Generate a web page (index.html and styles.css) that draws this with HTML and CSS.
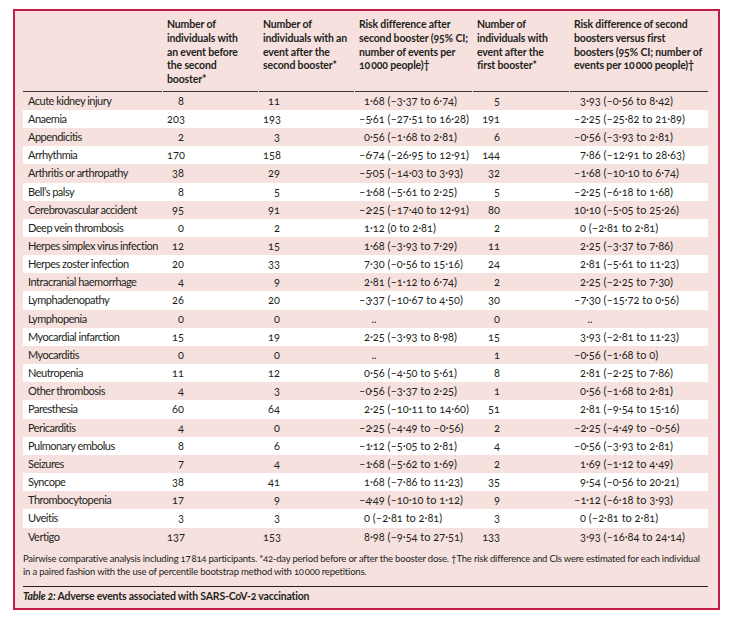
FILE: index.html
```html
<!DOCTYPE html>
<html lang="en">
<head>
<meta charset="utf-8">
<title>Table 2</title>
<link rel="stylesheet" href="styles.css">
</head>
<body>
<div class="panel">
  <div class="thead">
    <div class="th"></div>
    <div class="th">Number of<br>individuals with<br>an event before<br>the second<br>booster*</div>
    <div class="th">Number of<br>individuals with an<br>event after the<br>second booster*</div>
    <div class="th">Risk difference after<br>second booster (95% CI;<br>number of events per<br>10&#8201;000 people)&#8224;</div>
    <div class="th">Number of<br>individuals with<br>event after the<br>first booster*</div>
    <div class="th">Risk difference of second<br>boosters versus first<br>boosters (95% CI; number of<br>events per 10&#8201;000 people)&#8224;</div>
  </div>
  <div class="tbody">
    <div class="row"><div class="lab">Acute kidney injury</div><div class="n"><span class="a1">8</span></div><div class="n"><span class="a1">11</span></div><div class="d"><span class="i3">1</span>·68 (–3·37 to 6·74)</div><div class="n"><span class="a4">5</span></div><div class="d"><span class="i5">3</span>·93 (–0·56 to 8·42)</div></div>
    <div class="row"><div class="lab">Anaemia</div><div class="n"><span class="a1">203</span></div><div class="n"><span class="a1">193</span></div><div class="d"><span class="i3">–5</span>·61 (–27·51 to 16·28)</div><div class="n"><span class="a4">191</span></div><div class="d"><span class="i5">–2</span>·25 (–25·82 to 21·89)</div></div>
    <div class="row"><div class="lab">Appendicitis</div><div class="n"><span class="a1">2</span></div><div class="n"><span class="a1">3</span></div><div class="d"><span class="i3">0</span>·56 (–1·68 to 2·81)</div><div class="n"><span class="a4">6</span></div><div class="d"><span class="i5">–0</span>·56 (–3·93 to 2·81)</div></div>
    <div class="row"><div class="lab">Arrhythmia</div><div class="n"><span class="a1">170</span></div><div class="n"><span class="a1">158</span></div><div class="d"><span class="i3">–6</span>·74 (–26·95 to 12·91)</div><div class="n"><span class="a4">144</span></div><div class="d"><span class="i5">7</span>·86 (–12·91 to 28·63)</div></div>
    <div class="row"><div class="lab">Arthritis or arthropathy</div><div class="n"><span class="a1">38</span></div><div class="n"><span class="a1">29</span></div><div class="d"><span class="i3">–5</span>·05 (–14·03 to 3·93)</div><div class="n"><span class="a4">32</span></div><div class="d"><span class="i5">–1</span>·68 (–10·10 to 6·74)</div></div>
    <div class="row"><div class="lab">Bell’s palsy</div><div class="n"><span class="a1">8</span></div><div class="n"><span class="a1">5</span></div><div class="d"><span class="i3">–1</span>·68 (–5·61 to 2·25)</div><div class="n"><span class="a4">5</span></div><div class="d"><span class="i5">–2</span>·25 (–6·18 to 1·68)</div></div>
    <div class="row"><div class="lab">Cerebrovascular accident</div><div class="n"><span class="a1">95</span></div><div class="n"><span class="a1">91</span></div><div class="d"><span class="i3">–2</span>·25 (–17·40 to 12·91)</div><div class="n"><span class="a4">80</span></div><div class="d"><span class="i5">10</span>·10 (–5·05 to 25·26)</div></div>
    <div class="row"><div class="lab">Deep vein thrombosis</div><div class="n"><span class="a1">0</span></div><div class="n"><span class="a1">2</span></div><div class="d"><span class="i3">1</span>·12 (0 to 2·81)</div><div class="n"><span class="a4">2</span></div><div class="d"><span class="i5">0</span> (–2·81 to 2·81)</div></div>
    <div class="row"><div class="lab">Herpes simplex virus infection</div><div class="n"><span class="a1">12</span></div><div class="n"><span class="a1">15</span></div><div class="d"><span class="i3">1</span>·68 (–3·93 to 7·29)</div><div class="n"><span class="a4">11</span></div><div class="d"><span class="i5">2</span>·25 (–3·37 to 7·86)</div></div>
    <div class="row"><div class="lab">Herpes zoster infection</div><div class="n"><span class="a1">20</span></div><div class="n"><span class="a1">33</span></div><div class="d"><span class="i3">7</span>·30 (–0·56 to 15·16)</div><div class="n"><span class="a4">24</span></div><div class="d"><span class="i5">2</span>·81 (–5·61 to 11·23)</div></div>
    <div class="row"><div class="lab">Intracranial haemorrhage</div><div class="n"><span class="a1">4</span></div><div class="n"><span class="a1">9</span></div><div class="d"><span class="i3">2</span>·81 (–1·12 to 6·74)</div><div class="n"><span class="a4">2</span></div><div class="d"><span class="i5">2</span>·25 (–2·25 to 7·30)</div></div>
    <div class="row"><div class="lab">Lymphadenopathy</div><div class="n"><span class="a1">26</span></div><div class="n"><span class="a1">20</span></div><div class="d"><span class="i3">–3</span>·37 (–10·67 to 4·50)</div><div class="n"><span class="a4">30</span></div><div class="d"><span class="i5">–7</span>·30 (–15·72 to 0·56)</div></div>
    <div class="row"><div class="lab">Lymphopenia</div><div class="n"><span class="a1">0</span></div><div class="n"><span class="a1">0</span></div><div class="d"><span class="i3"></span>&#8201;..</div><div class="n"><span class="a4">0</span></div><div class="d"><span class="i5"></span>&#8201;..</div></div>
    <div class="row"><div class="lab">Myocardial infarction</div><div class="n"><span class="a1">15</span></div><div class="n"><span class="a1">19</span></div><div class="d"><span class="i3">2</span>·25 (–3·93 to 8·98)</div><div class="n"><span class="a4">15</span></div><div class="d"><span class="i5">3</span>·93 (–2·81 to 11·23)</div></div>
    <div class="row"><div class="lab">Myocarditis</div><div class="n"><span class="a1">0</span></div><div class="n"><span class="a1">0</span></div><div class="d"><span class="i3"></span>&#8201;..</div><div class="n"><span class="a4">1</span></div><div class="d"><span class="i5">–0</span>·56 (–1·68 to 0)</div></div>
    <div class="row"><div class="lab">Neutropenia</div><div class="n"><span class="a1">11</span></div><div class="n"><span class="a1">12</span></div><div class="d"><span class="i3">0</span>·56 (–4·50 to 5·61)</div><div class="n"><span class="a4">8</span></div><div class="d"><span class="i5">2</span>·81 (–2·25 to 7·86)</div></div>
    <div class="row"><div class="lab">Other thrombosis</div><div class="n"><span class="a1">4</span></div><div class="n"><span class="a1">3</span></div><div class="d"><span class="i3">–0</span>·56 (–3·37 to 2·25)</div><div class="n"><span class="a4">1</span></div><div class="d"><span class="i5">0</span>·56 (–1·68 to 2·81)</div></div>
    <div class="row"><div class="lab">Paresthesia</div><div class="n"><span class="a1">60</span></div><div class="n"><span class="a1">64</span></div><div class="d"><span class="i3">2</span>·25 (–10·11 to 14·60)</div><div class="n"><span class="a4">51</span></div><div class="d"><span class="i5">2</span>·81 (–9·54 to 15·16)</div></div>
    <div class="row"><div class="lab">Pericarditis</div><div class="n"><span class="a1">4</span></div><div class="n"><span class="a1">0</span></div><div class="d"><span class="i3">–2</span>·25 (–4·49 to –0·56)</div><div class="n"><span class="a4">2</span></div><div class="d"><span class="i5">–2</span>·25 (–4·49 to –0·56)</div></div>
    <div class="row"><div class="lab">Pulmonary embolus</div><div class="n"><span class="a1">8</span></div><div class="n"><span class="a1">6</span></div><div class="d"><span class="i3">–1</span>·12 (–5·05 to 2·81)</div><div class="n"><span class="a4">4</span></div><div class="d"><span class="i5">–0</span>·56 (–3·93 to 2·81)</div></div>
    <div class="row"><div class="lab">Seizures</div><div class="n"><span class="a1">7</span></div><div class="n"><span class="a1">4</span></div><div class="d"><span class="i3">–1</span>·68 (–5·62 to 1·69)</div><div class="n"><span class="a4">2</span></div><div class="d"><span class="i5">1</span>·69 (–1·12 to 4·49)</div></div>
    <div class="row"><div class="lab">Syncope</div><div class="n"><span class="a1">38</span></div><div class="n"><span class="a1">41</span></div><div class="d"><span class="i3">1</span>·68 (–7·86 to 11·23)</div><div class="n"><span class="a4">35</span></div><div class="d"><span class="i5">9</span>·54 (–0·56 to 20·21)</div></div>
    <div class="row"><div class="lab">Thrombocytopenia</div><div class="n"><span class="a1">17</span></div><div class="n"><span class="a1">9</span></div><div class="d"><span class="i3">–4</span>·49 (–10·10 to 1·12)</div><div class="n"><span class="a4">9</span></div><div class="d"><span class="i5">–1</span>·12 (–6·18 to 3·93)</div></div>
    <div class="row"><div class="lab">Uveitis</div><div class="n"><span class="a1">3</span></div><div class="n"><span class="a1">3</span></div><div class="d"><span class="i3">0</span> (–2·81 to 2·81)</div><div class="n"><span class="a4">3</span></div><div class="d"><span class="i5">0</span> (–2·81 to 2·81)</div></div>
    <div class="row"><div class="lab">Vertigo</div><div class="n"><span class="a1">137</span></div><div class="n"><span class="a1">153</span></div><div class="d"><span class="i3">8</span>·98 (–9·54 to 27·51)</div><div class="n"><span class="a4">133</span></div><div class="d"><span class="i5">3</span>·93 (–16·84 to 24·14)</div></div>
  </div>
  <p class="foot">Pairwise comparative analysis including 17&#8201;814 participants. *42-day period before or after the booster dose. †The risk difference and CIs were estimated for each individual in a paired fashion with the use of percentile bootstrap method with 10&#8201;000 repetitions.</p>
  <p class="caption"><em>Table 2:</em> Adverse events associated with SARS-CoV-2 vaccination</p>
</div>
</body>
</html>
```

FILE: styles.css
```css
html, body {
  margin: 0;
  padding: 0;
  background: #ffffff;
}

body {
  padding: 9px 0 0 13px;
  font-family: "Lato", "Open Sans", sans-serif;
  color: #231f20;
  font-variant-numeric: oldstyle-nums;
}

.panel {
  width: 707px;
  height: 601px;
  box-sizing: border-box;
  background: #f6e1df;
  border: 2px solid #bf1d47;
  padding: 7px 10px 0 8px;
}

.thead,
.row {
  display: grid;
  grid-template-columns: 140px 96px 96px 118px 97px 138px;
}

.th {
  font-size: 10.5px;
  font-weight: 700;
  line-height: 13.75px;
  padding: 0 0 4px 4px;
  border-bottom: 1px solid #3a3536;
  margin-right: 1px;
  white-space: nowrap;
  letter-spacing: -0.15px;
}

.th:last-child {
  margin-right: 0;
}

.row {
  height: 18.17px;
  font-size: 11px;
  line-height: 18.17px;
  white-space: nowrap;
}

.row:nth-child(even) {
  background: #ffffff;
}

.lab {
  padding-left: 5px;
  letter-spacing: -0.5px;
}

.n,
.d {
  padding-left: 4px;
}

.a1,
.a4,
.i3,
.i5 {
  display: inline-block;
  text-align: right;
}

.a1 { width: 17px; }
.a4 { width: 23px; }
.i3 { width: 11px; }
.i5 { width: 12px; }

.foot {
  margin: 6px 0 0 0;
  font-size: 9.5px;
  line-height: 13.3px;
  letter-spacing: -0.2px;
}

.caption {
  margin: 8px 0 0 0;
  padding-top: 2px;
  border-top: 1px solid #231f20;
  font-size: 10.5px;
  line-height: 14px;
  font-weight: 700;
  letter-spacing: -0.2px;
}

.caption em {
  font-style: italic;
}
```
